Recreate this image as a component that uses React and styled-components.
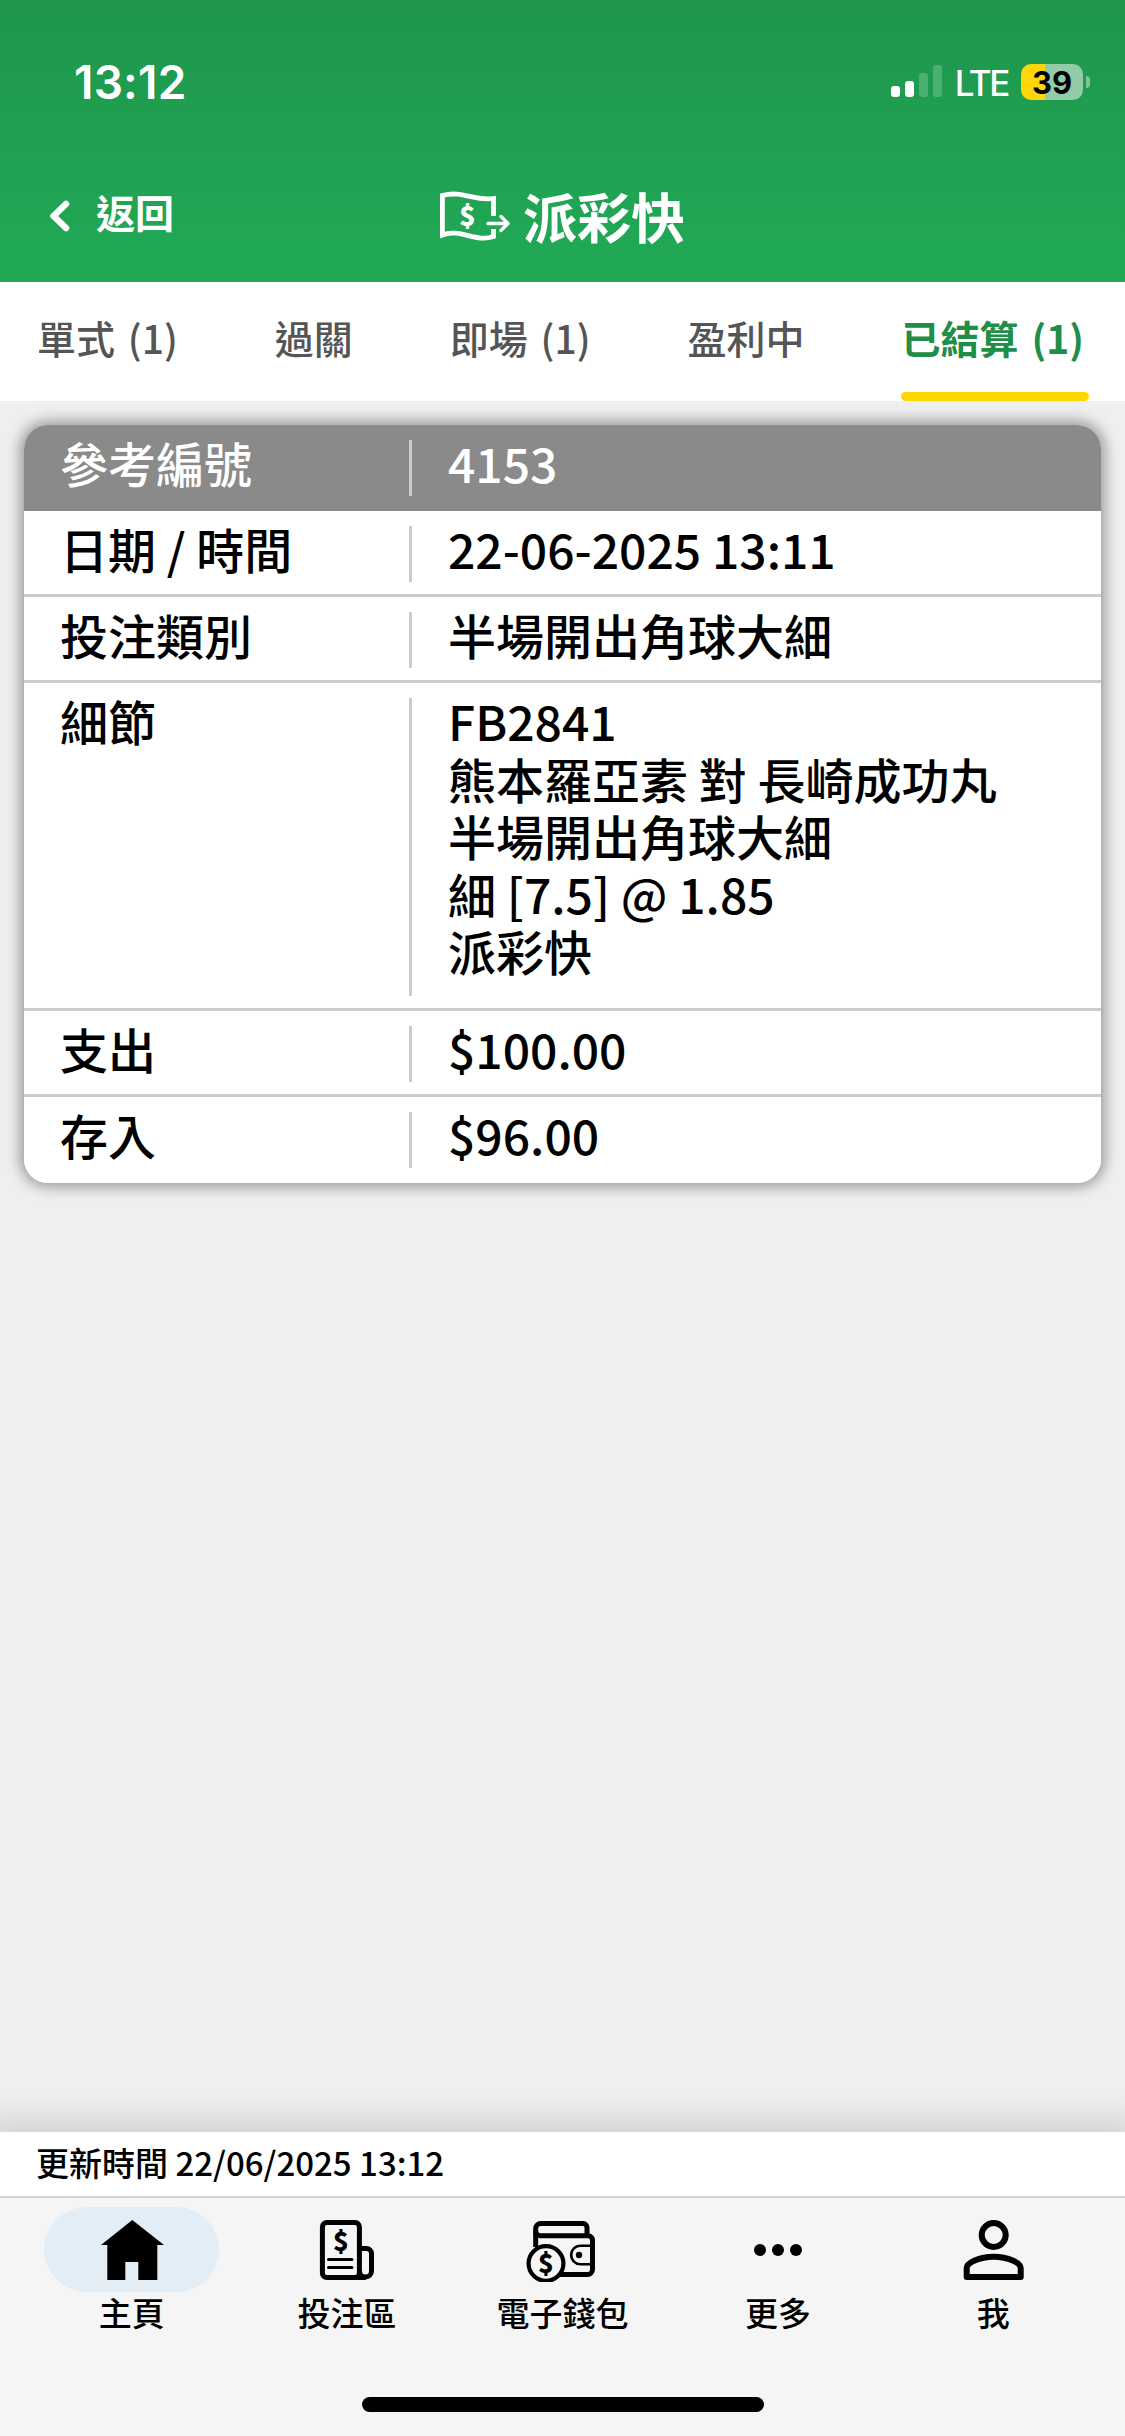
import React, { useState } from 'react';
import styled, { createGlobalStyle, css } from 'styled-components';

const GlobalStyle = createGlobalStyle`
	* {
		box-sizing: border-box;
	}

	body {
		margin: 0;
		background: #efefef;
		font-family: 'Noto Sans CJK TC', 'Liberation Sans', sans-serif;
		font-weight: 500;
		color: #000;
	}

	button {
		padding: 0;
		border: none;
		background: none;
		font: inherit;
		color: inherit;
		cursor: pointer;
	}
`;

const Screen = styled.div`
	display: flex;
	flex-direction: column;
	width: 1125px;
	height: 2436px;
	overflow: hidden;
	background: #efefef;
`;

const Top = styled.header`
	height: 282px;
	flex: none;
	color: #fff;
	background: linear-gradient(180deg, #1e964c 0%, #21aa56 100%);
`;

const StatusBar = styled.div`
	display: flex;
	align-items: center;
	justify-content: space-between;
	height: 164px;
	padding: 0 35px 0 74px;
	font-family: 'Inter', sans-serif;
`;

const Clock = styled.span`
	font-size: 46px;
	font-weight: 600;
	letter-spacing: 0.2px;
`;

const StatusIcons = styled.div`
	display: flex;
	align-items: center;
`;

const Network = styled.span`
	margin: 1px 13px 0 13px;
	font-size: 35px;
	font-weight: 500;
	letter-spacing: -2.4px;
`;

const Battery = styled.div`
	display: flex;
	align-items: center;
	justify-content: center;
	width: 62px;
	height: 36px;
	border-radius: 10px;
	background: linear-gradient(90deg, #ffd60a ${(props) => props.$level}%, #92cba8 ${(props) => props.$level}%);
	color: #000;
	font-size: 31px;
	font-weight: 700;
`;

const BatteryCap = styled.div`
	width: 4px;
	height: 12px;
	margin-left: 3px;
	border-radius: 0 4px 4px 0;
	background: #84c49d;
`;

const TitleBar = styled.div`
	display: grid;
	grid-template-columns: 1fr auto 1fr;
	align-items: center;
	height: 104px;
	padding: 0 51px 0 49px;
`;

const BackButton = styled.button`
	display: flex;
	align-items: center;
	gap: 25px;
	font-size: 39px;
	font-weight: 700;
	line-height: 1;
`;

const BackText = styled.span`
	padding-bottom: 9px;
`;

const Title = styled.h1`
	display: flex;
	align-items: center;
	gap: 13px;
	margin: 0;
	font-size: 54px;
	font-weight: 700;
	line-height: 1;
`;

const Tabs = styled.nav`
	display: flex;
	justify-content: space-between;
	flex: none;
	height: 119px;
	padding: 0 36px;
	background: #fff;
`;

const Tab = styled.button`
	display: flex;
	flex-direction: column;
	justify-content: space-between;
	height: 119px;
	padding-top: 26px;
	font-size: 39px;
	line-height: 58px;
	font-weight: 500;
	word-spacing: 4px;
	color: #555;
	white-space: nowrap;

	&::after {
		content: '';
		height: 9px;
		border-radius: 5px;
		align-self: stretch;
	}

	${(props) =>
		props.$active &&
		css`
			color: #1f8e49;
			font-weight: 700;

			&::after {
				background: #ffd700;
			}
		`}
`;

const TabText = styled.span`
	padding: 0 5px 0 1px;
`;

const Content = styled.main`
	flex: 1;
	padding: 24px;
`;

const Card = styled.section`
	overflow: hidden;
	border-radius: 24px;
	background: #fff;
	box-shadow: 0 0 14px 4px rgba(0, 0, 0, 0.36);
`;

const Row = styled.div`
	display: grid;
	grid-template-columns: 388px 1fr;
	padding: 15px 0 12px;
	border-bottom: 3px solid ${(props) => (props.$last || props.$head ? 'transparent' : '#ccc')};
	font-size: 48px;
	line-height: 57.6px;
	color: ${(props) => (props.$head ? '#fff' : '#000')};
	background: ${(props) => (props.$head ? '#8a8a8a' : '#fff')};
`;

const Label = styled.div`
	height: ${(props) => (props.$tall ? 298 : 56)}px;
	padding-left: 36px;
	border-right: 3px solid #ccc;
`;

const Value = styled.div`
	height: 56px;
	padding-left: 36px;
	white-space: pre-line;
`;

// the type sits slightly above the centre of the separator
const CellText = styled.div`
	margin-top: -6px;
`;

const UpdateBar = styled.div`
	flex: none;
	height: 66px;
	padding-left: 36px;
	border-bottom: 2px solid #d2d2d2;
	background: #fff;
	box-shadow: 0 0 30px 14px rgba(0, 0, 0, 0.12);
	font-size: 33px;
	line-height: 60px;
`;

const BottomNav = styled.nav`
	position: relative;
	display: grid;
	grid-template-columns: repeat(5, 1fr);
	flex: none;
	height: 199px;
	padding: 9px 24px 0;
	background: #f5f5f5;
`;

const NavItem = styled.button`
	display: flex;
	flex-direction: column;
	align-items: center;
	font-size: 33px;
	line-height: 40px;
`;

const Pill = styled.span`
	display: flex;
	align-items: center;
	justify-content: center;
	width: 175px;
	height: 85px;
	border-radius: 43px;
	background: ${(props) => (props.$active ? '#e2edf6' : 'transparent')};
`;

const Footer = styled.div`
	position: relative;
	display: flex;
	justify-content: center;
	flex: none;
	height: 39px;
	background: #f5f5f5;
`;

const HomeIndicator = styled.div`
	width: 402px;
	height: 15px;
	border-radius: 8px;
	background: #000;
`;

const SignalIcon = () => (
	<svg width='51' height='34' viewBox='0 0 51 34' fill='#fff'>
		<rect x='0' y='21' width='9' height='11' rx='3' />
		<rect x='14' y='16' width='9' height='16' rx='3' />
		<rect x='28' y='8' width='9' height='24' rx='3' opacity='0.2' />
		<rect x='42' y='0' width='9' height='32' rx='3' opacity='0.2' />
	</svg>
);

const BackIcon = () => (
	<svg width='22' height='34' viewBox='0 0 22 34' fill='none' stroke='#fff' strokeWidth='6.5' strokeLinecap='round' strokeLinejoin='round'>
		<path d='M17 5 4.5 17 17 29' />
	</svg>
);

const CashOutIcon = () => (
	<svg width='72' height='52' viewBox='0 0 72 52' fill='none' stroke='#fff' strokeWidth='4.8'>
		<path d='M55.5 26V8.5C36 11.5 24 0 4.4 5.5V45C22 38 38 53 55.5 46.5V39' />
		<path d='M50 33.5H69M63 26.5 70 33.5 63 40.5' strokeWidth='3.4' strokeLinecap='round' strokeLinejoin='round' />
		<text x='29.5' y='36' textAnchor='middle' fontSize='27' fontWeight='900' fill='#fff' stroke='none'>
			$
		</text>
	</svg>
);

const HomeIcon = () => (
	<svg width='80' height='65' viewBox='0 0 80 65'>
		<path d='M40.3 3 72 28H65.3V63H46.3V45H33.3V63H15.3V28H9Z' />
	</svg>
);

const BetSlipIcon = () => (
	<svg width='80' height='65' viewBox='0 0 80 65' fill='none' stroke='#000' strokeWidth='5'>
		<rect x='15.4' y='5.5' width='37' height='55' rx='4.5' />
		<path d='M52.4 31.5H59.5a5 5 0 0 1 5 5V54a6 6 0 0 1-12 0' />
		<path d='M47 60.5H59' />
		<path d='M21.5 42.5H45M21.5 50.5H45' strokeWidth='3' strokeLinecap='round' />
		<text x='34' y='33.5' textAnchor='middle' fontSize='26' fontWeight='900' fill='#000' stroke='none'>
			$
		</text>
	</svg>
);

const WalletIcon = () => (
	<svg width='80' height='65' viewBox='0 0 80 65' fill='none' stroke='#000' strokeWidth='5'>
		<path d='M13.7 30V11.5a5 5 0 0 1 5-5H61a4 4 0 0 1 4 4V18' />
		<path d='M13.7 14a4.5 4.5 0 0 0 4.5 4.7H66a4.5 4.5 0 0 1 4.5 4.5V52.5a5 5 0 0 1-5 5H38' />
		<path d='M70 28.7H58.5a9.3 9.3 0 0 0 0 18.6H70' strokeWidth='2.6' />
		<circle cx='57' cy='38' r='3.2' fill='#000' stroke='none' />
		<circle cx='24' cy='46.5' r='17.4' strokeWidth='4.2' />
		<text x='24' y='55.5' textAnchor='middle' fontSize='26' fontWeight='900' fill='#000' stroke='none'>
			$
		</text>
	</svg>
);

const MoreIcon = () => (
	<svg width='80' height='65' viewBox='0 0 80 65'>
		<circle cx='22' cy='33' r='6' />
		<circle cx='40' cy='33' r='6' />
		<circle cx='58' cy='33' r='6' />
	</svg>
);

const MeIcon = () => (
	<svg width='80' height='65' viewBox='0 0 80 65' fill='none' stroke='#000' strokeWidth='6' strokeLinejoin='round'>
		<circle cx='40.7' cy='18' r='12' />
		<path d='M13.7 60V51C13.7 46 26 39.7 40.7 39.7S67.7 46 67.7 51V60Z' />
	</svg>
);

const tabs = ['單式 (1)', '過關', '即場 (1)', '盈利中', '已結算 (1)'];

const record = [
	{ label: '參考編號', value: '4153' },
	{ label: '日期 / 時間', value: '22-06-2025 13:11' },
	{ label: '投注類別', value: '半場開出角球大細' },
	{
		label: '細節',
		value: 'FB2841\n熊本羅亞素 對 長崎成功丸\n半場開出角球大細\n細 [7.5] @ 1.85\n派彩快',
		tall: true,
	},
	{ label: '支出', value: '$100.00' },
	{ label: '存入', value: '$96.00' },
];

const navItems = [
	{ text: '主頁', Icon: HomeIcon },
	{ text: '投注區', Icon: BetSlipIcon },
	{ text: '電子錢包', Icon: WalletIcon },
	{ text: '更多', Icon: MoreIcon },
	{ text: '我', Icon: MeIcon },
];

const App = () => {
	const [activeTab, setActiveTab] = useState(4);
	const [activeNav, setActiveNav] = useState(0);

	return (
		<Screen>
			<GlobalStyle />
			<Top>
				<StatusBar>
					<Clock>13:12</Clock>
					<StatusIcons>
						<SignalIcon />
						<Network>LTE</Network>
						<Battery $level={39}>39</Battery>
						<BatteryCap />
					</StatusIcons>
				</StatusBar>
				<TitleBar>
					<BackButton>
						<BackIcon />
						<BackText>返回</BackText>
					</BackButton>
					<Title>
						<CashOutIcon />
						派彩快
					</Title>
				</TitleBar>
			</Top>

			<Tabs>
				{tabs.map((tab, i) => (
					<Tab key={tab} $active={i === activeTab} onClick={() => setActiveTab(i)}>
						<TabText>{tab}</TabText>
					</Tab>
				))}
			</Tabs>

			<Content>
				<Card>
					{record.map((item, i) => (
						<Row key={item.label} $head={i === 0} $last={i === record.length - 1}>
							<Label $tall={item.tall}>
								<CellText>{item.label}</CellText>
							</Label>
							<Value>
								<CellText>{item.value}</CellText>
							</Value>
						</Row>
					))}
				</Card>
			</Content>

			<UpdateBar>更新時間 22/06/2025 13:12</UpdateBar>
			<BottomNav>
				{navItems.map(({ text, Icon }, i) => (
					<NavItem key={text} onClick={() => setActiveNav(i)}>
						<Pill $active={i === activeNav}>
							<Icon />
						</Pill>
						<span>{text}</span>
					</NavItem>
				))}
			</BottomNav>
			<Footer>
				<HomeIndicator />
			</Footer>
		</Screen>
	);
};

export default App;
